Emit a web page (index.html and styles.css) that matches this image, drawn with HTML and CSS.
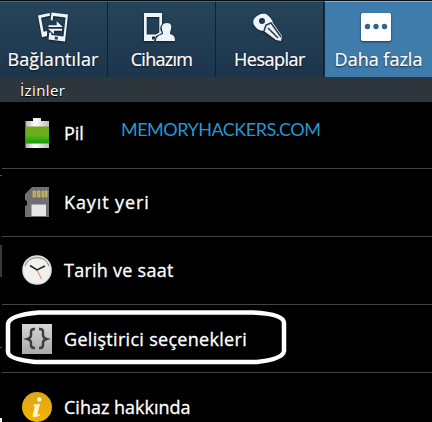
FILE: index.html
```
<!DOCTYPE html>
<html lang="tr">
<head>
<meta charset="utf-8">
<title>Ayarlar</title>
<link rel="stylesheet" href="styles.css">
</head>
<body>
<main class="screen">
  <nav class="tabs">
    <a class="tab">
      <svg class="tab-icon" viewBox="0 0 32 32">
        <path fill="#edf4fa" d="M1 4.500 12.500 2l.6 2.800L4 6.800l2.600 14L10 20v5l-5 1.200z"/>
        <path fill="#edf4fa" fill-rule="evenodd" d="M14.500 1.500 31 3.500 28 30.500 11.500 28.500l.8-7 2.200.3-.3 2.200 12.300 1.500L28.600 6.500 16.200 5l-.6 4.500-2-.2z"/>
        <path fill="#edf4fa" d="M11.500 14.300h8.200v-4l6 5.700H11.500zM25 17.700H11l6 5.500v-3.500h8z"/>
        <path fill="#24435b" d="m18 25.500 3 .4-.4 2.800-3-.4z"/>
      </svg>
      <span class="label l1">Bağlantılar</span>
    </a>
    <a class="tab">
      <svg class="tab-icon" viewBox="0 0 32 32">
        <path fill="#edf4fa" fill-rule="evenodd" d="M0 2h18v11c-2.500 3-2 6 0 9l-6 3-2 5H0zM2.700 6v17.500H12l3.300-2V6zM8 25.500v3h3v-3z"/>
        <path fill="#edf4fa" d="M23 12c4 0 5 3 4 6-.5 2-1 3-1 5 3 1 5 2 5 7H12c0-4 3-6 7-7 0-2-1-3-1-5-1-3 1-6 5-6z"/>
      </svg>
      <span class="label l2">Cihazım</span>
    </a>
    <a class="tab">
      <svg class="tab-icon" viewBox="0 0 32 32">
        <path fill="#edf4fa" fill-rule="evenodd" d="M2 8c3-4 7-6 12-5 4 3 6 5 7 9l9 13-1 5-5-1-12-9c-5 0-8-3-10-6-1-2-1-4 0-6zm8-1a3 3 0 1 0 0 6 3 3 0 0 0 0-6z"/>
        <path fill="none" stroke="#203b50" stroke-width="1.500" d="m12 20 2-6 5-2 10 14M16 17l10 10"/>
      </svg>
      <span class="label l3">Hesaplar</span>
    </a>
    <a class="tab active">
      <svg class="tab-icon" viewBox="0 0 32 32">
        <rect x="0" y="2" width="30" height="28" rx="2" fill="#fff"/>
        <g fill="#356488"><circle cx="6.500" cy="15.500" r="2.700"/><circle cx="15" cy="15.500" r="2.700"/><circle cx="23.500" cy="15.500" r="2.700"/></g>
      </svg>
      <span class="label l4">Daha fazla</span>
    </a>
  </nav>
  <h2 class="section"><span>İzinler</span></h2>
  <ul class="list">
    <li class="row">
      <svg class="icon" viewBox="0 0 30 30">
        <defs>
          <linearGradient id="bat" x2="0" y2="1"><stop stop-color="#78a51c"/><stop offset=".5" stop-color="#67b31b"/><stop offset="1" stop-color="#149b08"/></linearGradient>
          <linearGradient id="cap"><stop stop-color="#b5b5b5"/><stop offset=".4" stop-color="#fff"/><stop offset="1" stop-color="#bdbdbd"/></linearGradient>
        </defs>
        <path fill="url(#cap)" d="M11 0h8v3h8v27H3.500V3H11z"/>
        <path fill="url(#bat)" d="M3.500 8.500H27v17H3.500z"/>
      </svg>
      <span class="name n1">Pil</span>
    </li>
    <li class="row">
      <svg class="icon" viewBox="0 0 30 30">
        <path fill="#707070" d="M10 0h17v30H3V19l2-1v-4l-2-1V7z"/>
        <g fill="#b7a13b" stroke="#e3d67e" stroke-width=".6"><path d="M11 4h2.500v6H11zM15.500 4H18v6h-2.500zM20 4h1.800v6H20zM23.300 4H25v6h-1.700z"/></g>
        <path fill="#e5e7e9" d="M9.500 17.500H24V29H9.500z"/>
      </svg>
      <span class="name n2">Kayıt yeri</span>
    </li>
    <li class="row">
      <svg class="icon" viewBox="0 0 30 30">
        <circle cx="15" cy="15" r="14.800" fill="#e4e2df"/>
        <circle cx="15" cy="15.500" r="12.800" fill="#f2f0ec"/>
        <path d="M3 11a12.800 12.800 0 0 1 24 0" fill="none" stroke="#777" stroke-width=".9"/>
        <path d="m15 15 4.500 9" stroke="#e29689" stroke-width="1.200"/>
        <path d="m8 10.500 7 4.500 8-4" fill="none" stroke="#222" stroke-width="1.500"/>
      </svg>
      <span class="name n3">Tarih ve saat</span>
    </li>
    <li class="row marked">
      <svg class="icon" viewBox="0 0 30 30">
        <defs><linearGradient id="dev" x2="0" y2="1"><stop stop-color="#d6d6d6"/><stop offset="1" stop-color="#aaa"/></linearGradient></defs>
        <path fill="url(#dev)" d="M0 0h30v30H0z"/>
        <path fill="none" stroke="#3c3c3c" stroke-width="2.400" d="M13 5h-1q-3 0-3 3v3q0 3-3.500 4Q9 16 9 19v2q0 3 3 3h1M17 5h1q3 0 3 3v3q0 3 3.500 4Q21 16 21 19v2q0 3-3 3h-1"/>
      </svg>
      <span class="name n4">Geliştirici seçenekleri</span>
      <svg class="outline" viewBox="0 0 284 56">
        <path fill="none" stroke="#fff" stroke-width="4.500" d="M34 3.500H248Q279 5 279 14v28Q278 50 252 53H30Q3 50 3 43V15Q4 6 34 3.500z"/>
      </svg>
    </li>
    <li class="row">
      <svg class="icon" viewBox="0 0 30 30">
        <defs><linearGradient id="inf" x2="0" y2="1"><stop stop-color="#dda51a"/><stop offset="1" stop-color="#f4b300"/></linearGradient></defs>
        <circle cx="15" cy="15" r="15" fill="url(#inf)"/>
        <circle cx="17.300" cy="7.500" r="2.200" fill="#fff5cf"/>
        <path fill="#fff5cf" d="m11.500 12.500 6.500-.8-2.700 11 2.700-.5-.5 1.500-5.500 1.800-1.500-1.500 2.300-9.500-1.800-.5z"/>
      </svg>
      <span class="name n5">Cihaz hakkında</span>
    </li>
  </ul>
  <div class="watermark">MEMORYHACKERS.COM</div>
  <i class="edge e1"></i><i class="edge e2"></i><i class="edge e3"></i><i class="edge e4"></i>
</main>
</body>
</html>
```
FILE: styles.css
```
* { box-sizing: border-box; }
body { margin: 0; background: #000; }
.screen {
  position: relative;
  width: 432px;
  height: 422px;
  overflow: hidden;
  color: #fff;
  font-family: "Open Sans", "Noto Sans", sans-serif;
}
.tabs {
  display: grid;
  grid-template-columns: repeat(4, 1fr);
  height: 77px;
  border-top: 1px solid #050d16;
}
.tab {
  display: flex;
  flex-direction: column;
  align-items: center;
  padding-top: 9px;
  background: linear-gradient(#25445a, #1d354c);
  border-top: 1px solid #526374;
  border-right: 1px solid #0e2236;
}
.tab.active {
  background: #407cab;
  border-top-color: #8bb3d2;
  border-left: 1px solid #142c43;
  border-right: 0;
}
.tab-icon { width: 32px; height: 32px; margin-right: 3px; filter: drop-shadow(0 1px 1px #0008); }
.tab:first-child .tab-icon { margin-right: 2px; }
.label {
  margin-top: 3px;
  font-size: 18px;
  line-height: 26px;
  white-space: nowrap;
  text-shadow: 0 1px 2px #000b;
  -webkit-text-stroke: .2px #fff;
}
.l1 { letter-spacing: .1px; margin-left: -1px; }
.l2 { letter-spacing: -.7px; }
.l3 { letter-spacing: -.5px; }
.section {
  display: flex;
  align-items: center;
  height: 25px;
  margin: 0;
  padding-left: 20px;
  background: #2c363c;
  font-size: 15px;
  font-weight: 400;
  letter-spacing: .4px;
  text-shadow: 0 1px 1px #000;
}
.list { margin: 0 0 0 2px; padding: 0; list-style: none; }
.row {
  position: relative;
  display: flex;
  align-items: center;
  gap: 12px;
  height: 68.300px;
  padding-left: 20px;
  border-bottom: 1px solid #434343;
}
.row:first-child { height: 66.500px; padding-bottom: 4px; }
.icon { width: 30px; height: 30px; }
.name {
  font-size: 18px;
  line-height: 26px;
  white-space: nowrap;
  -webkit-text-stroke: .3px #fff;
}
.n2 { letter-spacing: .9px; }
.n3 { letter-spacing: .25px; }
.n4 { letter-spacing: .3px; }
.outline { position: absolute; left: 3px; top: 4px; width: 284px; height: 56px; }
.watermark {
  position: absolute;
  left: 121px;
  top: 117px;
  color: #2797d3;
  font-family: Lato, sans-serif;
  font-size: 18px;
  letter-spacing: -.5px;
  line-height: 24px;
}
.edge { position: absolute; left: 0; width: 2px; height: 1px; background: #555; }
.e1 { top: 175px; }
.e2 { top: 245px; height: 32px; background: #343a3d; }
.e3 { top: 347px; }
.e4 { top: 418px; height: 4px; background: #fff; }
```
